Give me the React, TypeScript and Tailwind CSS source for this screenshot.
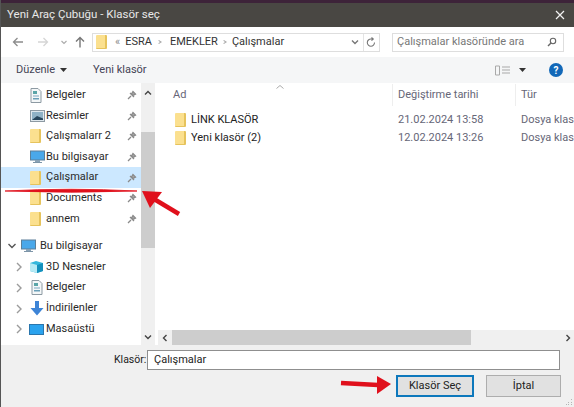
const Folder = ({ s = 'w-[11px] h-[14px]' }: { s?: string }) => (
  <span className={`${s} block shrink-0 bg-[#fbe08f] border-r-2 border-b border-[#e6c35c] rounded-[1px]`} />
);

const Pin = () => (
  <svg width="10" height="10" viewBox="0 0 10 10" className="shrink-0">
    <path d="M1 9 L4 6 M3 3 L7 7 M4.5 4 L6 1.5 L8.5 4 L6 5.5Z" stroke="#8a8a8a" strokeWidth="1.3" fill="#a8a8a8" />
  </svg>
);

const Monitor = ({ w = 15 }: { w?: number }) => (
  <svg width={w} height="14" viewBox="0 0 15 14" className="shrink-0">
    <rect x="0.5" y="1" width="14" height="9" fill="#4aa8ea" stroke="#5c7f99" />
    <rect x="5" y="10" width="5" height="2" fill="#8aa2b5" />
    <rect x="3" y="12" width="9" height="1" fill="#7d95a8" />
  </svg>
);

const DocIcon = () => (
  <svg width="12" height="15" viewBox="0 0 12 15" className="shrink-0">
    <path d="M1 .5H8L11 3.5V14.5H1Z" fill="#f4f7f8" stroke="#8d9aa3" />
    <rect x="3" y="3" width="4" height="3" fill="#5aa5a8" />
    <rect x="3" y="7.5" width="6" height="1" fill="#7aa8c0" />
    <rect x="3" y="10" width="6" height="1.5" fill="#6a9fb8" />
  </svg>
);

const PicIcon = () => (
  <svg width="15" height="12" viewBox="0 0 15 12" className="shrink-0">
    <rect x=".5" y=".5" width="14" height="11" fill="#dfe8ee" stroke="#8d9aa3" />
    <rect x="2" y="2" width="11" height="8" fill="#8fb2c6" />
    <path d="M2 10 L7 6 L13 8.5 V10Z" fill="#27465c" />
  </svg>
);

const Cube = () => (
  <svg width="15" height="14" viewBox="0 0 15 14" className="shrink-0">
    <path d="M1 3 L7 1 L14 3 V11 L8 13 L1 11Z" fill="#35b8dc" />
    <path d="M1 3 L8 5 V13 L1 11Z" fill="#b6eaf5" />
    <path d="M8 5 L14 3 V11 L8 13Z" fill="#1590bc" />
  </svg>
);

const Down = () => (
  <svg width="14" height="15" viewBox="0 0 14 15" className="shrink-0">
    <path d="M5 0H9V7H13.5L7 14.5L.5 7H5Z" fill="#3d84d6" />
  </svg>
);

const Desk = () => (
  <svg width="15" height="11" viewBox="0 0 15 11" className="shrink-0">
    <rect x=".5" y=".5" width="14" height="10" fill="#2ba3ee" stroke="#2a76ad" />
  </svg>
);

const Chev = ({ d = 'M3 1 L7 5 L3 9', c = '#9b9b9b', w = 10 }: { d?: string; c?: string; w?: number }) => (
  <svg width={w} height="10" viewBox="0 0 10 10" className="shrink-0">
    <path d={d} fill="none" stroke={c} strokeWidth="1.4" />
  </svg>
);

const pinned: [React.ReactNode, string, boolean?][] = [
  [<DocIcon />, 'Belgeler'],
  [<PicIcon />, 'Resimler'],
  [<Folder />, 'Çalışmalarr 2'],
  [<Monitor />, 'Bu bilgisayar'],
  [<Folder />, 'Çalışmalar', true],
  [<Folder />, 'Documents'],
  [<Folder />, 'annem'],
];

const tree: [React.ReactNode, string][] = [
  [<Cube />, '3D Nesneler'],
  [<DocIcon />, 'Belgeler'],
  [<Down />, 'İndirilenler'],
  [<Desk />, 'Masaüstü'],
];

const files = [
  ['LİNK KLASÖR', '21.02.2024 13:58'],
  ['Yeni klasör (2)', '12.02.2024 13:26'],
];

export default function App() {
  return (
    <div className="relative w-[574px] h-[407px] overflow-hidden bg-[#f0f0f0] border-l border-[#555] text-[11px] text-[#2a2a2a] font-['Roboto','Noto_Sans',sans-serif]">
      <div className="h-[3px] bg-[#3d2339]" />
      <div className="h-[24px] bg-[#494743] flex items-center justify-between pl-[6px] pr-[9px] text-[#e8e8e8] text-[11.5px]">
        <span>Yeni Araç Çubuğu - Klasör seç</span>
        <svg width="10" height="10" viewBox="0 0 10 10"><path d="M1 1 L9 9 M9 1 L1 9" stroke="#f2f2f2" strokeWidth="1.2" /></svg>
      </div>

      <div className="h-[30px] bg-white flex items-center pl-[11px] pr-[9px]">
        <div className="flex items-center w-[80px]">
          <svg width="12" height="10" viewBox="0 0 12 10"><path d="M11 5H1.5M5.5 1 L1.5 5 L5.5 9" fill="none" stroke="#8c8c8c" strokeWidth="1.3" /></svg>
          <svg width="12" height="10" viewBox="0 0 12 10" className="ml-[13px]"><path d="M1 5H10.5M6.5 1 L10.5 5 L6.5 9" fill="none" stroke="#d5d5d5" strokeWidth="1.3" /></svg>
          <svg width="6" height="5" viewBox="0 0 6 5" className="ml-[12px]"><path d="M.5 1 L3 3.5 L5.5 1" fill="none" stroke="#aaa" strokeWidth="1.1" /></svg>
          <svg width="10" height="12" viewBox="0 0 10 12" className="ml-[8px]"><path d="M5 11.5V1.5M1 5.5 L5 1.5 L9 5.5" fill="none" stroke="#777" strokeWidth="1.4" /></svg>
        </div>
        <div className="w-[288px] h-[19px] border border-[#dedede] flex items-center pl-[3px] text-[#333]">
          <Folder s="w-[11px] h-[14px]" />
          <span className="ml-[8px] text-[#888]">«</span>
          <span className="ml-[5px]">ESRA</span>
          <span className="ml-[5px]"><Chev w={8} c="#aaa" d="M2 3 L5 5 L2 7" /></span>
          <span className="ml-[5px]">EMEKLER</span>
          <span className="ml-[4px]"><Chev w={8} c="#aaa" d="M2 3 L5 5 L2 7" /></span>
          <span className="ml-[2px]">Çalışmalar</span>
          <div className="ml-auto flex items-center h-full">
            <span className="mr-[3px]"><Chev c="#777" d="M2 3.5 L5 6.5 L8 3.5" /></span>
            <span className="w-px h-full bg-[#e4e4e4]" />
            <svg width="15" height="11" viewBox="0 0 15 11"><path d="M10.5 5.5A3.6 3.6 0 1 1 7 2H9M7.5 .5 L9.3 2 L7.5 3.7" fill="none" stroke="#777" strokeWidth="1.1" /></svg>
          </div>
        </div>
        <div className="ml-[12px] w-[172px] h-[19px] border border-[#dedede] flex items-center justify-between pl-[4px] pr-[6px] text-[#777]">
          <span>Çalışmalar klasöründe ara</span>
          <svg width="10" height="10" viewBox="0 0 10 10"><circle cx="6" cy="4" r="2.7" fill="none" stroke="#666" strokeWidth="1.1" /><path d="M4 6 L1 9" stroke="#666" strokeWidth="1.4" /></svg>
        </div>
      </div>

      <div className="h-[26px] bg-[#f5f6f7] flex items-center pl-[15px] pr-[11px] text-[#445]">
        <span>Düzenle</span>
        <svg width="7" height="4" viewBox="0 0 7 4" className="ml-[5px]"><path d="M0 0H7L3.5 4Z" fill="#333" /></svg>
        <span className="ml-[26px]">Yeni klasör</span>
        <svg width="16" height="11" viewBox="0 0 16 11" className="ml-auto"><path d="M.5 1H4.5V10H.5ZM7 2H15M7 5H15M7 8H15" fill="none" stroke="#a9a9a9" /></svg>
        <svg width="7" height="4" viewBox="0 0 7 4" className="ml-[8px]"><path d="M0 0H7L3.5 4Z" fill="#333" /></svg>
        <span className="ml-[23px] w-[14px] h-[14px] rounded-full bg-[#1268b8] text-white text-[10px] font-bold flex items-center justify-center">?</span>
      </div>

      <div className="h-[262px] bg-white flex">
        <div className="w-[140px] flex flex-col pt-[2px] shrink-0">
          {pinned.map(([icon, label, sel]) => (
            <div key={label} className={`h-[20.6px] shrink-0 flex items-center ${sel ? 'bg-[#cce8ff]' : ''}`}>
              <span className="w-[45px] pl-[29px] flex items-center shrink-0">{icon}</span>
              <span className="flex-1">{label}</span>
              <span className="mr-[4px]"><Pin /></span>
            </div>
          ))}
          <div className="h-[6.6px] shrink-0" />
          <div className="h-[20.8px] shrink-0 flex items-center pl-[6px]">
            <Chev c="#555" d="M1.5 3 L5 6.5 L8.5 3" />
            <span className="ml-[4px]"><Monitor /></span>
            <span className="ml-[4px]">Bu bilgisayar</span>
          </div>
          {tree.map(([icon, label]) => (
            <div key={label} className="h-[20.8px] shrink-0 flex items-center pl-[13px]">
              <Chev />
              <span className="ml-[5px] w-[15px] flex justify-center shrink-0">{icon}</span>
              <span className="ml-[2px]">{label}</span>
            </div>
          ))}
        </div>
        <div className="w-[14px] h-full bg-[#f0f0f0] flex flex-col items-center shrink-0">
          <div className="h-[20px] shrink-0 flex items-center"><Chev c="#444" d="M2 6.5 L5 3.5 L8 6.5" /></div>
          <div className="w-full h-[29px] shrink-0" />
          <div className="w-full h-[116px] shrink-0 bg-[#cdcdcd]" />
          <div className="mt-auto h-[17px] flex items-center"><Chev c="#444" d="M2 3.5 L5 6.5 L8 3.5" /></div>
        </div>
        <div className="flex-1 flex flex-col min-w-0 pl-[3px]">
          <div className="flex-1 relative overflow-hidden">
            <div className="flex h-[24px] items-center text-[#667]">
              <span className="w-[234px] shrink-0 pl-[15px]">Ad</span>
              <span className="w-[123px] shrink-0 pl-[5px] border-l border-[#eee] leading-[22px]">Değiştirme tarihi</span>
              <span className="pl-[5px] border-l border-[#eee] leading-[22px]">Tür</span>
            </div>
            <svg width="8" height="4" viewBox="0 0 8 4" className="absolute left-[118px] top-[2px]"><path d="M.5 3.5 L4 .5 L7.5 3.5" fill="none" stroke="#aaa" /></svg>
            <div className="pt-[4px]">
              {files.map(([n, d]) => (
                <div key={n} className="h-[18px] flex items-center whitespace-nowrap">
                  <span className="w-[234px] shrink-0 pl-[17px] flex items-center gap-[5px] text-[#222]"><Folder />{n}</span>
                  <span className="w-[123px] shrink-0 pl-[6px] text-[#667]">{d}</span>
                  <span className="pl-[6px] text-[#667]">Dosya klasörü</span>
                </div>
              ))}
            </div>
          </div>
          <div className="h-[15px] bg-[#f0f0f0] flex items-center shrink-0">
            <span className="w-[14px] flex justify-center"><Chev c="#444" d="M6.5 2 L3.5 5 L6.5 8" /></span>
            <span className="w-[299px] h-full bg-[#cdcdcd]" />
            <span className="ml-auto mr-[1px]"><Chev c="#444" d="M3.5 2 L6.5 5 L3.5 8" /></span>
          </div>
        </div>
      </div>

      <div className="relative h-[62px] text-[#222]">
        <div className="flex items-center pt-[5px] pl-[113px]">
          <span className="w-[33px] text-[10.5px]">Klasör:</span>
          <div className="w-[413px] h-[20px] bg-white border border-[#8f8f8f] flex items-center pl-[6px]">Çalışmalar</div>
        </div>
        <div className="flex justify-end mt-[5px] pr-[13px] gap-[12px]">
          <div className="w-[78px] h-[22px] bg-[#e1e1e1] border-2 border-[#0d78bc] flex items-center justify-center">Klasör Seç</div>
          <div className="w-[75px] h-[22px] bg-[#e1e1e1] border border-[#adadad] flex items-center justify-center">İptal</div>
        </div>
        <svg width="8" height="8" viewBox="0 0 8 8" className="absolute right-[1px] bottom-[1px]"><path d="M6 1H7V2H6ZM3 4H4V5H3ZM6 4H7V5H6ZM1 6H2V7H1ZM3 6H4V7H3ZM6 6H7V7H6Z" fill="#b5b5b5" /></svg>
      </div>

      <svg width="574" height="407" viewBox="0 0 574 407" className="absolute left-[-1px] top-0 pointer-events-none">
        <path d="M5 191 Q70 187.5 137 191 Q70 193.5 5 191Z" fill="#e0101c" stroke="#e0101c" strokeWidth=".8" />
        <path d="M179 214 L154 199" stroke="#e0101c" strokeWidth="4.5" />
        <path d="M142 191 L162 192 L150 208Z" fill="#e0101c" />
        <path d="M341 383 L378 385" stroke="#e0101c" strokeWidth="4.5" />
        <path d="M391 384 L377 376 L377 394Z" fill="#e0101c" />
      </svg>
    </div>
  );
}
